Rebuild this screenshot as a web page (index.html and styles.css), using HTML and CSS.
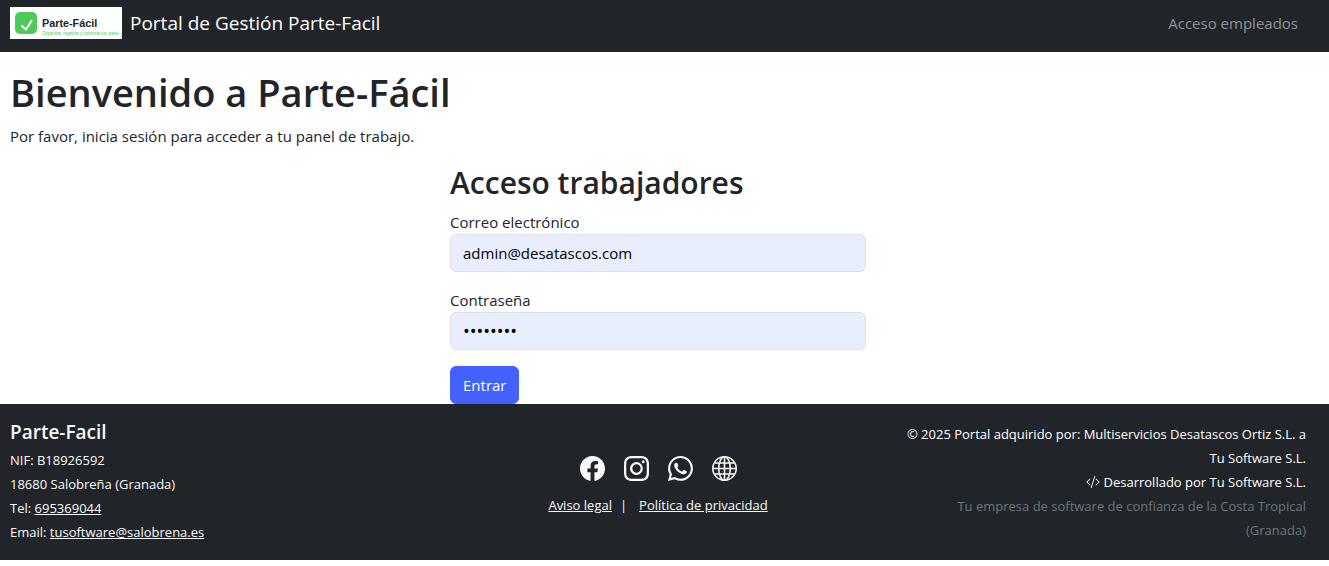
FILE: index.html
```html
<!DOCTYPE html>
<html lang="es">
<head>
<meta charset="utf-8">
<meta name="viewport" content="width=device-width, initial-scale=1">
<title>Portal de Gestión Parte-Facil</title>
<link rel="stylesheet" href="styles.css">
</head>
<body>
<header class="navbar">
  <a class="brand" href="#">
    <svg class="logo" viewBox="0 0 1120 320" role="img" aria-label="Parte-Fácil">
      <rect width="1120" height="320" fill="#fff"/>
      <rect x="50" y="50" width="220" height="220" rx="50" fill="#4fc95a"/>
      <path d="M115 185 160 225 220 130" fill="none" stroke="#fff" stroke-width="20"/>
      <text class="logo-name" x="320" y="200">Parte-Fácil</text>
      <text class="logo-tag" x="320" y="282">Organiza, registra y controla tus parte</text>
    </svg>
    <span>Portal de Gestión Parte-Facil</span>
  </a>
  <nav><a class="nav-link" href="#">Acceso empleados</a></nav>
</header>

<main class="content">
  <h1 class="title">Bienvenido a Parte-Fácil</h1>
  <p class="lead">Por favor, inicia sesión para acceder a tu panel de trabajo.</p>
  <form class="login">
    <h2 class="login-title">Acceso trabajadores</h2>
    <div class="field">
      <label for="email">Correo electrónico</label>
      <input class="control" id="email" type="email" value="admin@desatascos.com">
    </div>
    <div class="field">
      <label for="password">Contraseña</label>
      <input class="control control-password" id="password" type="password" value="password">
    </div>
    <button class="submit" type="submit">Entrar</button>
  </form>
</main>

<footer class="footer">
  <div class="company">
    <h5 class="company-name">Parte-Facil</h5>
    <p>NIF: B18926592</p>
    <p>18680 Salobreña (Granada)</p>
    <p>Tel: <a href="tel:695369044">695369044</a></p>
    <p>Email: <a href="mailto:tusoftware@salobrena.es">tusoftware@salobrena.es</a></p>
  </div>
  <div class="middle">
    <div class="social">
      <a href="#" aria-label="Facebook"><svg class="icon" viewBox="0 0 16 16"><path d="M16 8.049c0-4.446-3.582-8.050-8-8.050C3.580 0-.002 3.603-.002 8.050c0 4.017 2.926 7.347 6.750 7.951v-5.625h-2.030V8.050H6.750V6.275c0-2.017 1.195-3.131 3.022-3.131.876 0 1.791.157 1.791.157v1.980h-1.009c-.993 0-1.303.621-1.303 1.258v1.510h2.218l-.354 2.326H9.250V16c3.824-.604 6.750-3.934 6.750-7.951"/></svg></a>
      <a href="#" aria-label="Instagram"><svg class="icon" viewBox="0 0 16 16"><path d="M8 0C5.829 0 5.556.010 4.703.048 3.850.088 3.269.222 2.760.420a3.900 3.900 0 0 0-1.417.923A3.900 3.900 0 0 0 .420 2.760C.222 3.268.087 3.850.048 4.700.010 5.555 0 5.827 0 8.001c0 2.172.010 2.444.048 3.297.040.852.174 1.433.372 1.942.205.526.478.972.923 1.417.444.445.890.719 1.416.923.510.198 1.090.333 1.942.372C5.555 15.990 5.827 16 8 16s2.444-.010 3.298-.048c.851-.040 1.434-.174 1.943-.372a3.900 3.900 0 0 0 1.416-.923c.445-.445.718-.891.923-1.417.197-.509.332-1.090.372-1.942C15.990 10.445 16 10.173 16 8s-.010-2.445-.048-3.299c-.040-.851-.175-1.433-.372-1.941a3.900 3.900 0 0 0-.923-1.417A3.900 3.900 0 0 0 13.240.420c-.510-.198-1.092-.333-1.943-.372C10.443.010 10.172 0 7.998 0zm-.717 1.442h.718c2.136 0 2.389.007 3.232.046.780.035 1.204.166 1.486.275.373.145.640.319.920.599s.453.546.598.920c.110.281.240.705.275 1.485.039.843.047 1.096.047 3.231s-.008 2.389-.047 3.232c-.035.780-.166 1.203-.275 1.485a2.500 2.500 0 0 1-.599.919c-.280.280-.546.453-.920.598-.280.110-.704.240-1.485.276-.843.038-1.096.047-3.232.047s-2.390-.009-3.233-.047c-.780-.036-1.203-.166-1.485-.276a2.500 2.500 0 0 1-.920-.598 2.500 2.500 0 0 1-.600-.920c-.109-.281-.240-.705-.275-1.485-.038-.843-.046-1.096-.046-3.233s.008-2.388.046-3.231c.036-.780.166-1.204.276-1.486.145-.373.319-.640.599-.920s.546-.453.920-.598c.282-.110.705-.240 1.485-.276.738-.034 1.024-.044 2.515-.045zm4.988 1.328a.960.960 0 1 0 0 1.920.960.960 0 0 0 0-1.920m-4.270 1.122a4.109 4.109 0 1 0 0 8.217 4.109 4.109 0 0 0 0-8.217m0 1.441a2.667 2.667 0 1 1 0 5.334 2.667 2.667 0 0 1 0-5.334"/></svg></a>
      <a href="#" aria-label="WhatsApp"><svg class="icon" viewBox="0 0 16 16"><path d="M13.601 2.326A7.850 7.850 0 0 0 7.994 0C3.627 0 .068 3.558.064 7.926c0 1.399.366 2.760 1.057 3.965L0 16l4.204-1.102a7.900 7.900 0 0 0 3.790.965h.004c4.368 0 7.926-3.558 7.930-7.930A7.900 7.900 0 0 0 13.600 2.326zM7.994 14.521a6.600 6.600 0 0 1-3.356-.920l-.240-.144-2.494.654.666-2.433-.156-.251a6.560 6.560 0 0 1-1.007-3.505c0-3.626 2.957-6.584 6.591-6.584a6.560 6.560 0 0 1 4.660 1.931 6.560 6.560 0 0 1 1.928 4.660c-.004 3.639-2.961 6.592-6.592 6.592m3.615-4.934c-.197-.099-1.170-.578-1.353-.646-.182-.065-.315-.099-.445.099-.133.197-.513.646-.627.775-.114.133-.232.148-.430.050-.197-.100-.836-.308-1.592-.985-.590-.525-.985-1.175-1.103-1.372-.114-.198-.011-.304.088-.403.087-.088.197-.232.296-.346.100-.114.133-.198.198-.330.065-.134.034-.248-.015-.347-.050-.099-.445-1.076-.612-1.470-.160-.389-.323-.335-.445-.340-.114-.007-.247-.007-.380-.007a.730.730 0 0 0-.529.247c-.182.198-.691.677-.691 1.654s.710 1.916.810 2.049c.098.133 1.394 2.132 3.383 2.992.470.205.840.326 1.129.418.475.152.904.129 1.246.080.380-.058 1.171-.480 1.338-.943.164-.464.164-.860.114-.943-.049-.084-.182-.133-.380-.232"/></svg></a>
      <a href="#" aria-label="Sitio web"><svg class="icon icon-line" viewBox="0 0 16 16"><circle cx="8" cy="8" r="7.500"/><ellipse cx="8" cy="8" rx="3.700" ry="7.500"/><path d="M8 .5v15M.5 8h15M1.700 4.500h12.600M1.700 11.500h12.600"/></svg></a>
    </div>
    <div class="legal"><a href="#">Aviso legal</a><span>|</span><a href="#">Política de privacidad</a></div>
  </div>
  <div class="credits">
    <p>© 2025 Portal adquirido por: Multiservicios Desatascos Ortiz S.L. a Tu Software S.L.</p>
    <p><svg class="code" viewBox="0 0 16 16" aria-hidden="true"><path d="M10.478 1.647a.500.500 0 1 0-.956-.294l-4 13a.500.500 0 0 0 .956.294zM4.854 4.146a.500.500 0 0 1 0 .708L1.707 8l3.147 3.146a.500.500 0 0 1-.708.708l-3.500-3.500a.500.500 0 0 1 0-.708l3.500-3.500a.500.500 0 0 1 .708 0m6.292 0a.500.500 0 0 0 0 .708L14.293 8l-3.147 3.146a.500.500 0 0 0 .708.708l3.500-3.500a.500.500 0 0 0 0-.708l-3.500-3.500a.500.500 0 0 0-.708 0"/></svg> Desarrollado por Tu Software S.L.</p>
    <p class="muted">Tu empresa de software de confianza de la Costa Tropical (Granada)</p>
  </div>
</footer>
</body>
</html>
```
FILE: styles.css
```css
*,
*::before,
*::after {
  box-sizing: border-box;
}

body {
  margin: 0;
  background: #fff;
  color: #212529;
  font: 15px/24px "Segoe UI", "Open Sans", "Noto Sans", sans-serif;
}

h1, h2, h5, p {
  margin: 0;
}

.navbar,
.content,
.footer {
  padding-left: 10px;
  padding-right: 23px;
}

.navbar {
  display: flex;
  align-items: center;
  justify-content: space-between;
  min-height: 52px;
  padding-bottom: 6px;
  background: #212529;
}

.brand {
  display: flex;
  align-items: center;
  gap: 8px;
  color: #fff;
  font-size: 19px;
  text-decoration: none;
}

.logo {
  width: 112px;
  height: 32px;
}

.logo-name {
  font: bold 108px "Liberation Sans", Arial, sans-serif;
  fill: #212529;
}

.logo-tag {
  font: 46px "Liberation Sans", Arial, sans-serif;
  fill: #4fc95a;
}

.nav-link {
  padding: 8px;
  color: #909294;
  text-decoration: none;
}

.content {
  padding-top: 16px;
}

.title {
  margin-bottom: 8px;
  font-size: 38px;
  font-weight: 600;
  line-height: 48px;
}

.lead {
  margin-bottom: 16px;
}

.login {
  width: calc((100% - 48px) / 3);
  margin: 0 auto;
}

.login-title {
  margin-bottom: 8px;
  font-size: 30px;
  font-weight: 600;
  line-height: 38px;
}

.field {
  margin-bottom: 16px;
}

.field label {
  display: block;
}

.control {
  display: block;
  width: 100%;
  height: 38px;
  padding: 6px 12px;
  border: 1px solid #dee2e6;
  border-radius: 6px;
  background: #e8eefd;
  color: #000;
  font: inherit;
}

.control-password {
  font-size: 18px;
}

.submit {
  display: block;
  height: 38px;
  padding: 6px 12px;
  border: 1px solid #4361ff;
  border-radius: 6px;
  background: #4361ff;
  color: #fff;
  font: inherit;
}

.footer {
  display: grid;
  grid-template-columns: repeat(3, 1fr);
  align-items: center;
  gap: 24px;
  padding-top: 16px;
  padding-bottom: 16px;
  background: #212529;
  color: #f8f9fa;
  font-size: 13px;
}

.footer a {
  color: inherit;
}

.company-name {
  margin-bottom: 4px;
  font-size: 19px;
  font-weight: 600;
}

.middle {
  display: flex;
  flex-direction: column;
  align-items: center;
  gap: 12px;
  padding-top: 8px;
}

.social {
  display: flex;
  gap: 19px;
}

.icon {
  display: block;
  width: 25px;
  height: 25px;
  fill: currentColor;
}

.icon-line {
  fill: none;
  stroke: currentColor;
}

.legal {
  display: flex;
  gap: 8px;
}

.legal span {
  margin-right: 4px;
}

.credits {
  padding-left: 8px;
  color: #fff;
  text-align: right;
}

.code {
  width: 14px;
  height: 14px;
  vertical-align: -2px;
  fill: currentColor;
}

.muted {
  color: #6c757d;
}
```
